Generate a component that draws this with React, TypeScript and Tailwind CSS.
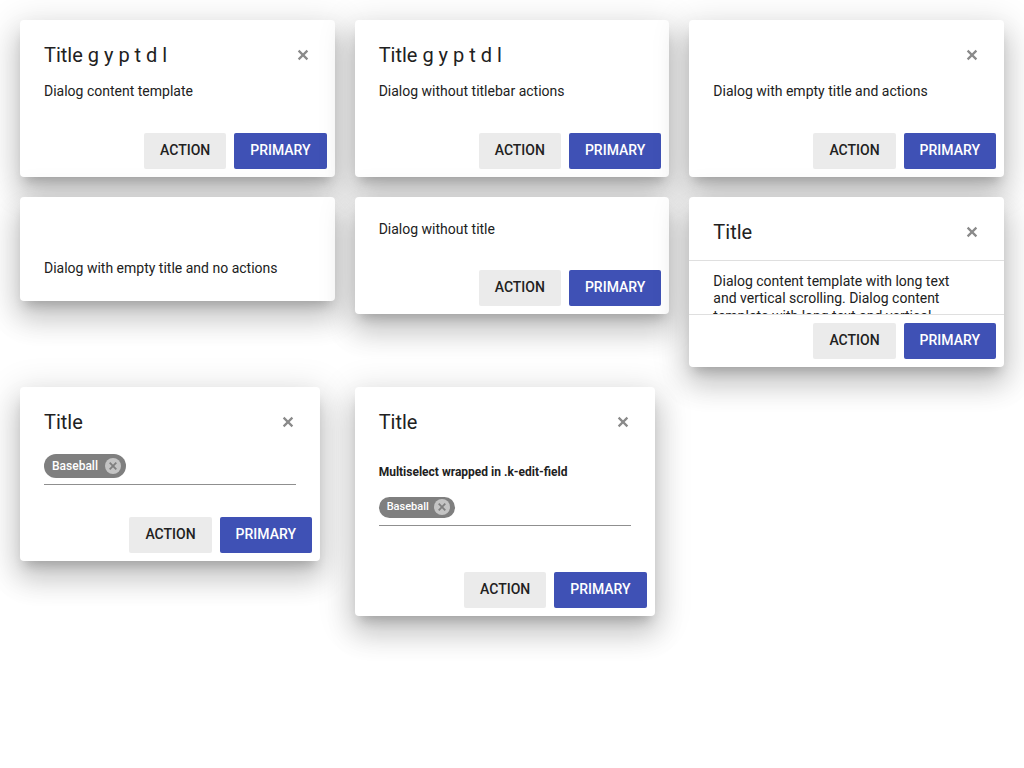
import type { ReactNode } from "react";

function CrossIcon() {
  return (
    <svg viewBox="0 0 16 16" className="size-4" fill="none" stroke="currentColor" strokeWidth="2.2" aria-hidden="true">
      <path d="M3.6 3.6 12.4 12.4M12.4 3.6 3.6 12.4" />
    </svg>
  );
}

function RemoveIcon() {
  return (
    <svg viewBox="0 0 16 16" className="size-4" aria-hidden="true">
      <circle cx="8" cy="8" r="8" fill="#c4c4c4" />
      <path d="M4.7 4.7 11.3 11.3M11.3 4.7 4.7 11.3" fill="none" stroke="#7f7f7f" strokeWidth="1.8" />
    </svg>
  );
}

type TitlebarProps = { title?: string; closable?: boolean; divided?: boolean };

function Titlebar({ title = "", closable = true, divided = false }: TitlebarProps) {
  const border = divided ? "border-b border-[#dfdfdf]" : "";
  return (
    <header className={`flex items-start justify-between px-6 pt-6 pb-4 ${border}`}>
      <h2 className="h-[23px] text-xl leading-[23px] font-normal">{title}</h2>
      {closable && (
        <button type="button" aria-label="Close" className="mt-[3px] text-[#8a8a8a]">
          <CrossIcon />
        </button>
      )}
    </header>
  );
}

function Actions({ divided = false }: { divided?: boolean }) {
  const border = divided ? "border-t border-[#dfdfdf]" : "";
  return (
    <footer className={`flex justify-end gap-2 p-2 ${border}`}>
      <button type="button" className="h-9 rounded-xs bg-[#ebebeb] px-4 pb-0.5 text-sm leading-4 font-medium">
        ACTION
      </button>
      <button type="button" className="h-9 rounded-xs bg-[#3f51b5] px-4 pb-0.5 text-sm leading-4 font-medium text-white">
        PRIMARY
      </button>
    </footer>
  );
}

function Dialog({ children, narrow = false }: { children: ReactNode; narrow?: boolean }) {
  const width = narrow ? "w-full max-w-[300px]" : "w-full";
  return (
    <section
      role="dialog"
      className={`${width} rounded bg-white shadow-[0_9px_11px_-5px_rgba(0,0,0,0.2),0_18px_28px_2px_rgba(0,0,0,0.14),0_7px_34px_6px_rgba(0,0,0,0.12)]`}
    >
      {children}
    </section>
  );
}

function Chip({ label, small = false }: { label: string; small?: boolean }) {
  const size = small ? "h-[21px] text-[11px] gap-[5px]" : "h-6 text-xs gap-[7px]";
  return (
    <span className={`inline-flex items-center rounded-full bg-[#7f7f7f] pr-[5px] pl-2 font-medium text-white ${size}`}>
      {label}
      <button type="button" aria-label={`Remove ${label}`}>
        <RemoveIcon />
      </button>
    </span>
  );
}

export default function App() {
  return (
    <main
      className="grid min-h-screen grid-cols-3 content-start items-start gap-5 p-5 text-sm leading-tight text-[#212121]"
      style={{ fontFamily: 'Roboto, "Liberation Sans", sans-serif' }}
    >
      <Dialog>
        <Titlebar title="Title g y p t d l" />
        <p className="px-6 pb-6">Dialog content template</p>
        <Actions />
      </Dialog>

      <Dialog>
        <Titlebar title="Title g y p t d l" closable={false} />
        <p className="px-6 pb-6">Dialog without titlebar actions</p>
        <Actions />
      </Dialog>

      <Dialog>
        <Titlebar />
        <p className="px-6 pb-6">Dialog with empty title and actions</p>
        <Actions />
      </Dialog>

      <Dialog>
        <Titlebar closable={false} />
        <p className="px-6 pb-6">Dialog with empty title and no actions</p>
      </Dialog>

      <Dialog>
        <p className="px-6 py-6">Dialog without title</p>
        <Actions />
      </Dialog>

      <Dialog>
        <Titlebar title="Title" divided />
        <div className="h-[53px] overflow-y-auto pt-3 pr-10 pl-6 [scrollbar-width:none]">
          Dialog content template with long text and vertical scrolling. Dialog content template with long text and
          vertical
        </div>
        <Actions divided />
      </Dialog>

      <Dialog narrow>
        <Titlebar title="Title" />
        <div className="px-6 pb-6">
          <div className="flex border-b border-[#8f8f8f] pt-1 pb-1.5">
            <Chip label="Baseball" />
          </div>
        </div>
        <Actions />
      </Dialog>

      <Dialog narrow>
        <Titlebar title="Title" />
        <div className="px-6 pt-3.5 pb-[38px]">
          <h3 className="text-xs leading-4 font-bold">Multiselect wrapped in .k-edit-field</h3>
          <div className="flex border-b border-[#8f8f8f] pt-[17px] pb-[7px]">
            <Chip label="Baseball" small />
          </div>
        </div>
        <Actions />
      </Dialog>
    </main>
  );
}
